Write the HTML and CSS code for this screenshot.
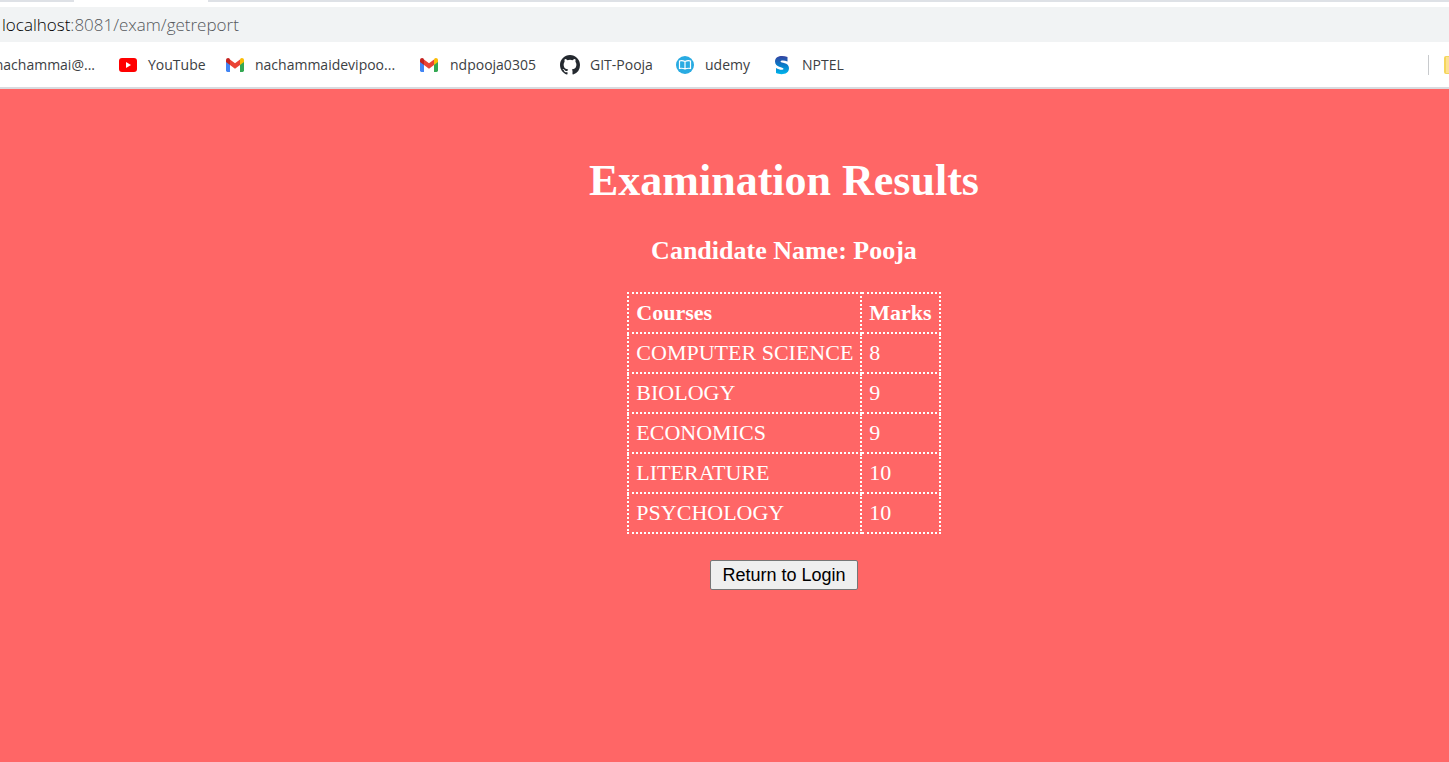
FILE: index.html
```html
<!DOCTYPE html>
<html lang="en">
<head>
<meta charset="utf-8">
<title>Examination Results</title>
<link rel="stylesheet" href="styles.css">
</head>
<body>
<svg class="defs" aria-hidden="true">
  <symbol id="gmail" viewBox="0 0 18 14">
    <path fill="#4285f4" d="M0 3v9.600Q0 14 1.400 14H4V6z"/>
    <path fill="#34a853" d="M14 6v8h2.600Q18 14 18 12.600V3z"/>
    <path fill="#fbbc04" d="M14 1.500V7l4-3V2.200C18 .2 15.700-.7 14.300.8z"/>
    <path fill="#ea4335" d="M4 7V1.500l5 3.800 5-3.800V7l-5 3.800z"/>
    <path fill="#c5221f" d="M0 2.200V4l4 3V1.500L3.700.8C2.300-.7 0 .2 0 2.200z"/>
  </symbol>
</svg>
<header class="browser">
  <div class="tabs"><div class="tab"></div></div>
  <div class="address"><span class="host">localhost</span>:8081/exam/getreport</div>
  <nav class="bookmarks" aria-label="Bookmarks">
    <a class="bookmark cut" href="#">nachammai@...</a>
    <a class="bookmark" href="#"><svg class="icon" viewBox="0 0 20 20"><rect x="1" y="3" width="18" height="14" rx="3" fill="#f00"/><path d="M8 7v6l5-3z" fill="#fff"/></svg>YouTube</a>
    <a class="bookmark" href="#"><svg class="icon"><use href="#gmail" x="1" y="3" width="18" height="14"/></svg>nachammaidevipoo...</a>
    <a class="bookmark" href="#"><svg class="icon"><use href="#gmail" x="0" y="3" width="18" height="14"/></svg>ndpooja0305</a>
    <a class="bookmark" href="#"><svg class="icon" viewBox="0 0 16 16"><path fill="#24292f" d="M8 0C3.580 0 0 3.580 0 8c0 3.540 2.290 6.530 5.470 7.590.4.070.55-.17.55-.38 0-.19-.01-.82-.01-1.490-2.010.37-2.530-.49-2.690-.94-.09-.23-.48-.94-.82-1.130-.28-.15-.68-.52-.01-.53.63-.01 1.080.58 1.230.82.72 1.210 1.870.87 2.330.66.07-.52.28-.87.51-1.070-1.780-.2-3.640-.89-3.640-3.950 0-.87.31-1.590.82-2.150-.08-.2-.36-1.020.08-2.120 0 0 .67-.21 2.200.82a7.600 7.600 0 0 1 4 0c1.530-1.040 2.200-.82 2.200-.82.44 1.100.16 1.920.08 2.120.51.56.82 1.270.82 2.150 0 3.070-1.870 3.750-3.650 3.950.29.25.54.73.54 1.480 0 1.070-.01 1.930-.01 2.200 0 .21.15.46.55.38A8.010 8.010 0 0 0 16 8c0-4.420-3.580-8-8-8z"/></svg>GIT-Pooja</a>
    <a class="bookmark" href="#"><svg class="icon" viewBox="0 0 20 20"><circle cx="10" cy="10" r="9" fill="#29abe2"/><path d="M10 6.500Q7 5 4.500 6v7.500Q7 12.800 10 14 13 12.800 15.500 13.500V6Q13 5 10 6.500zV14" fill="none" stroke="#fff" stroke-width="1.200"/></svg>udemy</a>
    <a class="bookmark" href="#"><svg class="icon" viewBox="0 0 20 20"><defs><linearGradient id="s" x1="0" y1="0" x2="0" y2="1"><stop offset="0" stop-color="#3542a0"/><stop offset=".5" stop-color="#087bc8"/><stop offset="1" stop-color="#00b5ec"/></linearGradient></defs><path d="M15.500 2v4.500C12.500 5 8.500 5 8.500 6.500c0 1.800 8.500.7 8.500 6.500 0 7-8.500 7-13 5v-5c3 2 7.500 2.500 7.500.8C11.500 11.700 3 13 3 6.500 3 .5 10.500 0 15.500 2z" fill="url(#s)"/></svg>NPTEL</a>
    <div class="overflow"><span class="divider"></span><span class="folder"></span></div>
  </nav>
</header>
<main class="report">
  <h1 class="title">Examination Results</h1>
  <h2 class="candidate">Candidate Name: Pooja</h2>
  <table class="marks">
    <thead><tr><th scope="col">Courses</th><th scope="col">Marks</th></tr></thead>
    <tbody>
      <tr><td>COMPUTER SCIENCE</td><td>8</td></tr>
      <tr><td>BIOLOGY</td><td>9</td></tr>
      <tr><td>ECONOMICS</td><td>9</td></tr>
      <tr><td>LITERATURE</td><td>10</td></tr>
      <tr><td>PSYCHOLOGY</td><td>10</td></tr>
    </tbody>
  </table>
  <button class="return" type="button">Return to Login</button>
</main>
</body>
</html>
```
FILE: styles.css
```css
* { box-sizing: border-box; }

body {
  margin: 0;
  min-height: 100vh;
  display: flex;
  flex-direction: column;
  background: #ff6666;
  font-family: "Liberation Serif", "Times New Roman", serif;
}

.defs { display: none; }

.browser {
  background: #fff;
  border-bottom: 2px solid #d9dbdf;
  font-family: "Open Sans", "Segoe UI", sans-serif;
  overflow: hidden;
}

.tabs {
  height: 2px;
  padding-left: 74px;
  background: #dee1e6;
}

.tab {
  width: 134px;
  height: 2px;
  background: #fff;
}

.address {
  margin-top: 5px;
  padding-left: 2px;
  background: #f1f3f4;
  color: #55585c;
  font-size: 17px;
  font-weight: 300;
  line-height: 35px;
}

.host { color: #000; }

.bookmarks {
  display: grid;
  grid-template-columns: 118px 107px 195px 140px 115px 97px 1fr auto;
  align-items: center;
  height: 45px;
}

.bookmark {
  display: flex;
  align-items: center;
  gap: 10px;
  color: #3c4043;
  font-size: 14px;
  line-height: 20px;
  text-decoration: none;
  white-space: nowrap;
}

.cut {
  justify-content: flex-end;
  padding-right: 23px;
}

.icon {
  flex: none;
  width: 20px;
  height: 20px;
}

.overflow {
  display: flex;
  align-items: center;
  gap: 15px;
}

.divider {
  width: 1px;
  height: 20px;
  background: #c8cacd;
}

.folder {
  width: 5px;
  height: 18px;
  border: 1px solid #f5d65c;
  border-right: 0;
  border-left-width: 2px;
  border-radius: 2px 0 0 2px;
  background: #fde293;
}

.report {
  flex: 1;
  display: flex;
  flex-direction: column;
  align-items: center;
  padding: 66px 0 40px 119px;
  color: #fff;
}

.title {
  margin: 0;
  font-size: 44px;
  line-height: 52px;
}

.candidate {
  margin: 29px 0 26px;
  font-size: 26px;
  line-height: 30px;
}

.marks {
  border-collapse: collapse;
  font-size: 22px;
  line-height: 26px;
}

.marks th,
.marks td {
  padding: 6px 7px;
  border: 2px dotted #fff;
  text-align: left;
}

.return {
  margin-top: 26px;
  padding: 0 11px;
  border: 1px solid #767676;
  border-radius: 2px;
  background: #efefef;
  color: #000;
  font-family: "Liberation Sans", Arial, sans-serif;
  font-size: 18px;
  line-height: 28px;
}
```
